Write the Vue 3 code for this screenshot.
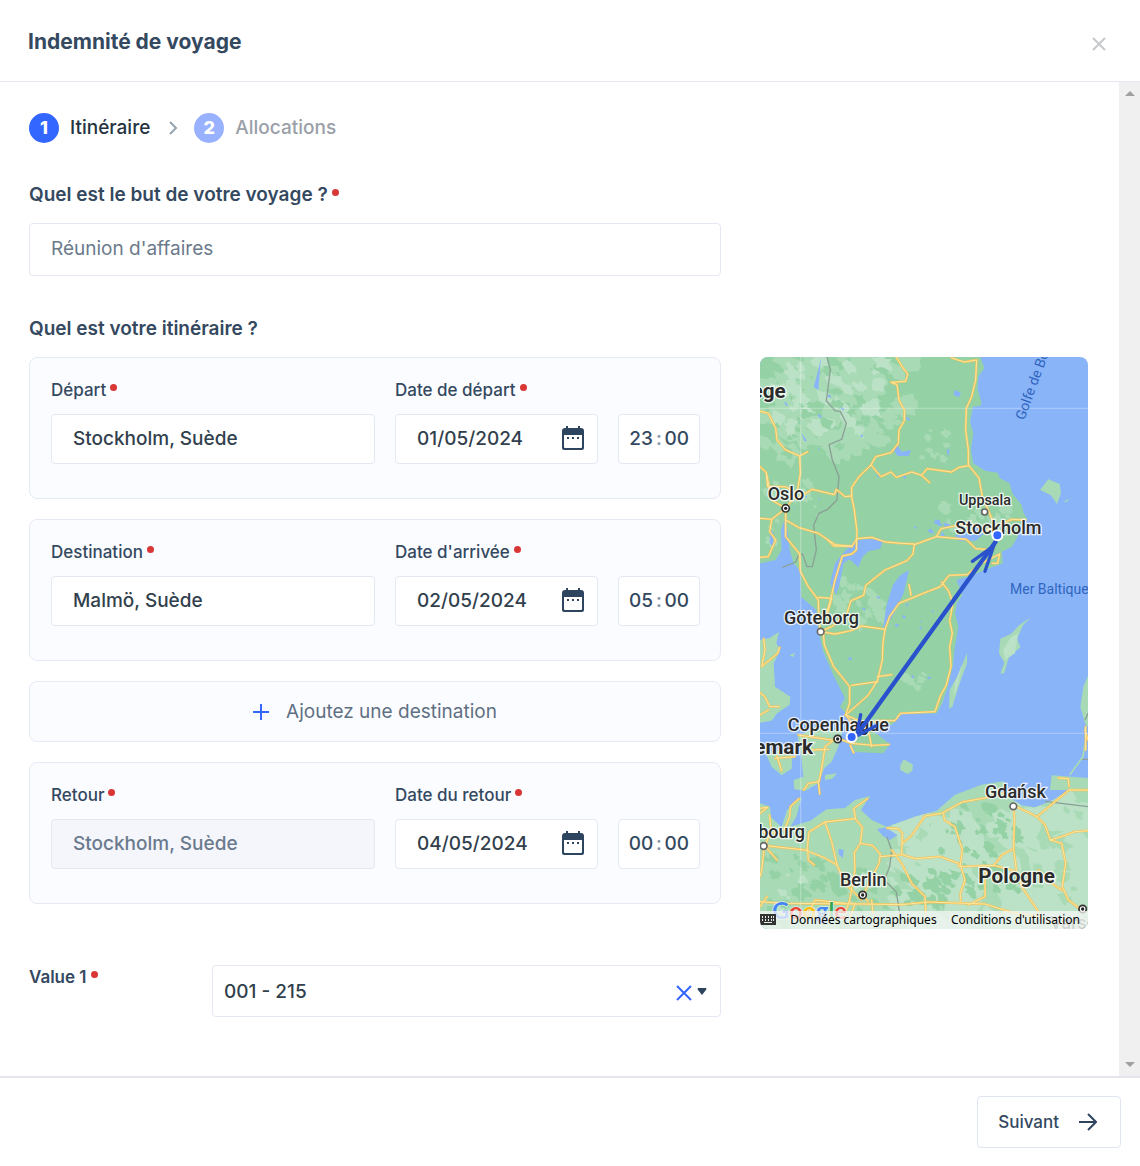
<script setup>
import { ref } from 'vue'

const purpose = ref("Réunion d'affaires")
const account = ref('001 - 215')
const stops = ref([
  { id: 'depart', label: 'Départ', dateLabel: 'Date de départ', place: 'Stockholm, Suède', date: '01/05/2024', hour: '23', minute: '00' },
  { id: 'destination', label: 'Destination', dateLabel: "Date d'arrivée", place: 'Malmö, Suède', date: '02/05/2024', hour: '05', minute: '00' },
  { id: 'add' },
  { id: 'retour', label: 'Retour', dateLabel: 'Date du retour', place: 'Stockholm, Suède', date: '04/05/2024', hour: '00', minute: '00', locked: true }
])

// Deterministic terrain patches: irregular polygons scattered inside a region.
function terrain(seed, count, [x, y, w, h], size) {
  let s = seed * 7919
  const rnd = () => {
    s = (s * 16807) % 2147483647
    return s / 2147483647
  }
  let d = ''
  for (let i = 0; i < count; i++) {
    const cx = x + rnd() * w
    const cy = y + rnd() * h
    const r = size * (0.4 + rnd())
    for (let k = 0; k < 13; k++) {
      const a = (k / 13) * Math.PI * 2
      const q = r * (0.45 + rnd() * 0.75)
      const px = Math.cos(a) * q
      const py = Math.sin(a) * q
      d += `${k ? 'L' : 'M'}${Math.round(cx + px + py * 0.15)} ${Math.round(cy + py * 0.9 + px * 0.15)}`
    }
    d += 'Z'
  }
  return d
}

const patches = [
  { fill: '#a8dab5', d: terrain(11, 60, [15, 21, 330, 300], 36) },
  { fill: '#a8dab5', d: terrain(17, 26, [300, 21, 170, 260], 30) },
  { fill: '#bbe2c6', d: terrain(23, 40, [60, 21, 330, 230], 24) },
  { fill: '#94d2a5', d: terrain(29, 34, [15, 150, 340, 260], 16) },
  { fill: '#a8dab5', d: terrain(31, 12, [500, 240, 80, 100], 14) },
  { fill: '#a8dab5', d: terrain(37, 16, [560, 470, 210, 70], 18) },
  { fill: '#a8dab5', d: terrain(41, 18, [230, 690, 150, 130], 22) },
  { fill: '#a8dab5', d: terrain(43, 8, [430, 970, 90, 50], 14) },
  { fill: '#a8dab5', d: terrain(47, 12, [15, 380, 180, 200], 17) },
  { fill: '#8ab4f8', d: terrain(53, 14, [80, 60, 400, 420], 5) },
  { fill: '#8ab4f8', d: terrain(59, 12, [260, 700, 300, 300], 5) },
  { fill: '#8ab4f8', d: terrain(61, 12, [480, 510, 240, 50], 8) }
]
const southPatches = [
  { fill: '#bbe2c6', d: terrain(67, 80, [430, 1380, 580, 350], 52) },
  { fill: '#94d2a5', d: terrain(71, 50, [560, 1360, 230, 280], 17) },
  { fill: '#94d2a5', d: terrain(73, 34, [15, 1520, 420, 210], 20) },
  { fill: '#94d2a5', d: terrain(79, 16, [440, 1560, 140, 110], 22) },
  { fill: '#bbe2c6', d: terrain(83, 14, [15, 1520, 400, 210], 15) },
  { fill: '#a8dab5', d: terrain(89, 12, [840, 1350, 160, 350], 20) }
]

const roads = [
  'M424 21L440 48L458 72L452 94L408 97L426 104L432 150L448 180L448 212L432 240L430 280L408 308L362 320L348 345L312 380L290 412L290 440L298 480L306 545L304 600L290 612L262 618L240 690L228 745L215 790',
  'M590 24L628 36L665 30L662 90L650 140L634 175L632 240L640 300L640 345L672 384L682 440L708 500L724 540',
  'M348 345L378 380L408 366L424 382L470 366L500 376L516 356L590 366L612 352L642 347M500 376L524 398',
  'M15 184L40 190L62 235L66 270L92 300L134 318L136 370L126 430L92 475L92 560L134 612L136 664L160 710L190 750L192 810L196 845',
  'M134 318L158 305M15 350L34 368L38 410L92 410L126 430M92 475L50 508L44 545L62 570L40 620L15 622M15 505L50 508M34 368L50 450L92 475',
  'M126 445L172 418L238 434L244 418L270 440L290 438M92 510L130 532L190 550L240 584L290 590L306 566L350 562L392 576L440 580L478 582L474 612L456 632L390 660L332 706L326 736L288 752L274 795L230 830L196 845L240 852L288 842L320 828L390 838',
  'M220 572L236 588L292 588M390 838L404 800L432 760L520 724L556 710L582 676L636 674L680 640L734 612L728 640L712 640M478 584L544 560L634 568L662 596L715 600M544 560L558 536L640 520L700 540L770 508L812 510M462 704L468 735',
  'M560 696L580 722L594 758L584 812L592 850L584 890L588 950L574 1005L556 1038L540 1085L436 1090L420 1112L372 1112L330 1120L272 1095',
  'M390 838L384 880L382 930L368 990L340 1035L310 1062L272 1095M368 980L410 974M368 995L290 1006',
  'M205 850L208 885L236 950L268 990L284 1010L284 1060L272 1095M190 742L230 745L215 800',
  'M26 866L30 900L20 950L68 910L74 892M15 1028L30 1040L44 1070L72 1070M40 1080L15 1095',
  'M250 1160L210 1190L204 1230L196 1276L192 1295L160 1300L146 1320M190 1292L194 1332M250 1166L290 1180L352 1186L402 1184M286 1186L296 1208M340 1140L350 1190M130 1155L230 1170M170 1200L220 1198M66 1218L80 1262M272 1095L300 1130L340 1145M60 1225L120 1220',
  'M15 1375L38 1372L15 1390M44 1396L48 1440L30 1490M132 1346L106 1370L104 1400L90 1435L70 1448L15 1446M15 1485L150 1500L210 1524L246 1545L270 1600L320 1650M28 1486L66 1530M28 1490L20 1560L15 1580M158 1498L160 1530L178 1545',
  'M156 1500L162 1446L210 1416L230 1475L246 1545M210 1416L300 1406L322 1432L316 1480L298 1508L300 1560L284 1650L270 1690M338 1346L296 1376L302 1406M316 1480L352 1486L376 1512L372 1540L324 1636L340 1655',
  'M376 1520L440 1514L442 1450L430 1436L396 1434M442 1480L470 1456L510 1398L560 1390L622 1356L700 1342L742 1330M440 1514L482 1526L556 1520L610 1540L612 1550L716 1546L730 1530L740 1515L772 1498',
  'M410 1500L440 1540L470 1600L510 1640L512 1690M566 1390L568 1410L600 1430L622 1500L616 1545L630 1590L616 1630L618 1656',
  'M15 1655L90 1660L324 1662L440 1664L520 1656L690 1662L780 1690L860 1700M160 1690L180 1650L270 1660M15 1670L36 1640M300 1660L286 1700M350 1650L354 1690',
  'M776 1370L778 1400L776 1498L784 1560L800 1610L850 1685M784 1370L846 1400L942 1320L999 1320M846 1400L870 1425L886 1470L920 1460L960 1445L999 1442M886 1470L920 1480L932 1540L922 1610L940 1650L980 1680M910 1284L940 1286L942 1310M800 1580L770 1560L716 1546M690 1560L690 1640L640 1665M850 1560L890 1600L920 1620',
  'M992 1130L992 1200M990 1140L999 1170'
]
</script>

<template>
  <div class="dialog">
    <header class="header">
      <h1 class="title">Indemnité de voyage</h1>
      <button class="icon-button close" type="button" aria-label="Fermer">
        <svg width="14" height="14" viewBox="0 0 14 14"><path d="M1 1L13 13M13 1L1 13" stroke="#c6c8cb" stroke-width="2" /></svg>
      </button>
    </header>

    <div class="body">
      <main class="content">
        <ol class="steps">
          <li class="step"><span class="bullet">1</span>Itinéraire</li>
          <li class="chevron" aria-hidden="true">
            <svg width="10" height="16" viewBox="0 0 10 16"><path d="M2 2L8 8L2 14" fill="none" stroke="#96a3af" stroke-width="2" /></svg>
          </li>
          <li class="step pending"><span class="bullet">2</span>Allocations</li>
        </ol>

        <form class="form" @submit.prevent>
          <div class="purpose">
            <label class="question" for="purpose">Quel est le but de votre voyage ?<i class="dot"></i></label>
            <input id="purpose" v-model="purpose" class="box purpose-input" type="text" />
          </div>

          <h2 class="question itinerary-title">Quel est votre itinéraire ?</h2>

          <div class="stops">
            <template v-for="stop in stops" :key="stop.id">
              <button v-if="stop.id === 'add'" class="add" type="button">
                <svg width="16" height="16" viewBox="0 0 16 16"><path d="M8 0V16M0 8H16" stroke="#3366ff" stroke-width="2" /></svg>
                <span>Ajoutez une destination</span>
              </button>
              <section v-else class="card">
                <div class="field place">
                  <label class="label" :for="stop.id">{{ stop.label }}<i class="dot"></i></label>
                  <input :id="stop.id" v-model="stop.place" class="box" type="text" :disabled="stop.locked" />
                </div>
                <div class="field when">
                  <label class="label" :for="stop.id + '-date'">{{ stop.dateLabel }}<i class="dot"></i></label>
                  <div class="when-row">
                    <div class="box date">
                      <input :id="stop.id + '-date'" v-model="stop.date" type="text" />
                      <button class="icon-button" type="button" aria-label="Calendrier">
                        <svg width="22" height="24" viewBox="0 0 22 24">
                          <path fill="#2e4560" fill-rule="evenodd" d="M3 2H4V0H6V2H16V0H18V2H19Q22 2 22 5V22Q22 24 20 24H2Q0 24 0 22V5Q0 2 3 2ZM2 9V21Q2 22 3 22H19Q20 22 20 21V9ZM5 11H7V13H5ZM10 11H12V13H10ZM15 11H17V13H15Z" />
                        </svg>
                      </button>
                    </div>
                    <div class="box time">
                      <input v-model="stop.hour" type="text" aria-label="Heures" /><span>:</span><input v-model="stop.minute" type="text" aria-label="Minutes" />
                    </div>
                  </div>
                </div>
              </section>
            </template>
          </div>

          <div class="map">
            <svg class="map-canvas" viewBox="15 21 984 1716" preserveAspectRatio="xMidYMid slice" role="img" aria-label="Carte du trajet">
              <defs>
                <path id="scandinavia" d="M15 21L676 21L688 55L670 80L668 118L680 160L674 168L654 170L645 215L655 250L648 300L655 340L690 362L728 368L735 385L764 400L758 378L772 430L800 465L806 490L816 505L790 530L788 560L770 590L740 606L744 640L715 650L690 660L640 680L605 690L622 735L606 760L600 790L610 830L600 890L594 945L578 1010L562 1060L545 1090L440 1092L410 1125L355 1110L350 1140L405 1182L385 1210L300 1206L285 1165L300 1120L255 1070L270 1045L235 975L205 905L192 850L184 780L138 740L136 664L116 640L104 600L98 545L90 505L78 540L80 600L62 630L15 640Z" />
                <path id="continent" d="M15 1360L45 1370L48 1402L80 1432L96 1380L140 1340L124 1400L106 1430L166 1412L215 1378L270 1374L300 1350L345 1338L318 1380L350 1410L395 1430L420 1422L480 1400L545 1382L600 1334L680 1304L745 1294L760 1310L736 1322L760 1340L800 1366L840 1372L895 1350L940 1320L885 1320L890 1276L999 1284V1737H15ZM999 978L985 1010L976 1070L990 1120L999 1130ZM15 870L44 864L72 846L64 880L76 900L56 940L60 1010L106 1040L104 1064L66 1090L50 1112L15 1118ZM128 1160L180 1132L262 1142L250 1190L230 1235L208 1255L190 1300L152 1322L118 1318L116 1290L145 1280L140 1230ZM34 1214L80 1196L112 1204L110 1256L80 1276L50 1250Z" />
                <clipPath id="north"><use href="#scandinavia" /></clipPath>
                <clipPath id="south"><use href="#continent" /></clipPath>
              </defs>

              <rect x="15" y="21" width="984" height="1716" fill="#8ab4f8" />
              <use href="#scandinavia" fill="#94d2a5" />
              <g clip-path="url(#north)">
                <path v-for="(patch, i) in patches" :key="i" :d="patch.d" :fill="patch.fill" />
              </g>
              <use href="#continent" fill="#a8dab5" />
              <g clip-path="url(#south)">
                <path v-for="(patch, i) in southPatches" :key="i" :d="patch.d" :fill="patch.fill" />
              </g>

              <!-- islands -->
              <path fill="#a8dab5" d="M855 420L880 388L914 402L918 430L906 462L888 436ZM925 455L945 445L935 455ZM828 802L792 826L768 852L736 866L732 910L748 938L736 972L748 968L762 920L796 892L786 866L804 826ZM636 908L612 970L584 1020L582 1076L592 1070L614 1000L636 940ZM436 1246L446 1228L474 1244L472 1262L458 1272L436 1260ZM104 916L120 908L114 922ZM210 1275L246 1270L232 1286L210 1290Z" />
              <path fill="#bbe2c6" d="M768 862L790 850L780 910L750 930L744 900ZM600 1000L622 940L610 1000L596 1040Z" />
              <!-- lakes -->
              <path fill="#8ab4f8" d="M225 700L240 640L262 612L298 572L330 568L384 568L376 596L340 604L322 622L310 652L284 628L266 640L254 700L244 734ZM462 660L446 730L410 804L384 836L394 768L414 704L436 676ZM425 282L440 305L468 300L462 318L428 318L416 300ZM198 21L190 120L176 110L190 60ZM598 120L618 128L612 142L596 134ZM140 250L156 272L148 274ZM366 1438L392 1432L428 1456L404 1470L384 1458ZM252 1496L266 1500L264 1524L250 1512ZM574 300L584 296L580 320ZM46 540L56 550L54 590L44 580ZM600 555L690 548L662 572L610 572Z" />

              <path fill="none" stroke="#8aa096" stroke-width="4" d="M216 21L226 60L214 152L240 182L256 184L274 220L260 268L222 284L232 330L252 380L246 450L218 478L192 490L176 526L184 600L172 650L156 650L142 612L130 618L122 636L82 652M396 1462L410 1500L404 1550L388 1590L424 1626L434 1690M870 1354L999 1370M976 1228H999M999 1090L990 1110" />
              <path fill="none" stroke="#a8dab5" stroke-width="5" d="M990 1180L984 1220L944 1275" />

              <g fill="none" stroke-linejoin="round" stroke-linecap="round">
                <path v-for="(road, i) in roads" :key="'e' + i" :d="road" stroke="#efc25a" stroke-width="7" />
                <path v-for="(road, i) in roads" :key="'c' + i" :d="road" stroke="#ffe8a0" stroke-width="3" />
              </g>

              <path d="M137 21V1737M15 175H999M15 1150H999" stroke="#ffffff" stroke-opacity="0.25" stroke-width="4" />

              <g stroke="#333333" stroke-width="5" fill="#ffffff">
                <circle cx="92" cy="475" r="11" /><circle cx="248" cy="1167" r="11" /><circle cx="323" cy="1635" r="11" /><circle cx="983" cy="1677" r="11" />
                <g stroke="#666666"><circle cx="689" cy="486" r="9" /><circle cx="197" cy="845" r="10" /><circle cx="775" cy="1369" r="10" /><circle cx="26" cy="1488" r="10" /></g>
              </g>
              <g fill="#222222"><circle cx="92" cy="475" r="5" /><circle cx="248" cy="1167" r="5" /><circle cx="323" cy="1635" r="5" /><circle cx="983" cy="1677" r="5" /></g>

              <g class="city">
                <text x="38" y="450">Oslo</text>
                <text x="612" y="465" class="town">Uppsala</text>
                <text x="601" y="553">Stockholm</text>
                <text x="87" y="823">Göteborg</text>
                <text x="98" y="1143">Copenhague</text>
                <text x="690" y="1345">Gdańsk</text>
                <text x="150" y="1464" text-anchor="end">Hambourg</text>
                <text x="255" y="1609">Berlin</text>
              </g>
              <g class="country">
                <text x="92" y="143" text-anchor="end">Norvège</text>
                <text x="174" y="1213" text-anchor="end">Danemark</text>
                <text x="670" y="1600">Pologne</text>
              </g>
              <g class="sea">
                <text x="765" y="731">Mer Baltique</text>
                <text transform="translate(808 212) rotate(-70)">Golfe de Botnie</text>
              </g>
              <text class="city" x="885" y="1738" opacity="0.6">Varsovie</text>

              <g fill="none" stroke="#2a52cc" stroke-linecap="round">
                <path stroke-width="13" d="M722 575L310 1148" />
                <path stroke-width="10" d="M652 634L716 588L690 664M317 1094L305 1158L362 1128" />
              </g>
              <g fill="#3366ff" stroke="#ffffff" stroke-width="6"><circle cx="727" cy="556" r="15" /><circle cx="290" cy="1161" r="15" /></g>

              <text class="google" x="52" y="1707"><tspan fill="#4285f4">G</tspan><tspan fill="#ea4335">o</tspan><tspan fill="#fbbc04">o</tspan><tspan fill="#4285f4">g</tspan><tspan fill="#34a853">l</tspan><tspan fill="#ea4335">e</tspan></text>
            </svg>
            <div class="attribution">
              <svg width="16" height="11" viewBox="0 0 16 11"><path fill="#333333" fill-rule="evenodd" d="M0 0H16V11H0ZM2 2V4H3V2ZM5 2V4H6V2ZM8 2V4H9V2ZM11 2V4H12V2ZM13 2V4H14V2ZM2 5V7H3V5ZM5 5V7H6V5ZM8 5V7H9V5ZM11 5V7H12V5ZM13 5V7H14V5ZM4 8V9H12V8Z" /></svg>
              <a href="#">Données cartographiques</a>
              <a href="#">Conditions d'utilisation</a>
            </div>
          </div>

          <div class="value">
            <label class="label value-label" for="value1">Value 1<i class="dot"></i></label>
            <div class="box select">
              <select id="value1" v-model="account"><option>001 - 215</option></select>
              <button class="icon-button clear" type="button" aria-label="Effacer">
                <svg width="16" height="16" viewBox="0 0 16 16"><path d="M1 1L15 15M15 1L1 15" stroke="#3366ff" stroke-width="2" /></svg>
              </button>
              <svg class="caret" width="10" height="7" viewBox="0 0 10 7"><path fill="#2e4560" d="M1 0H9Q10 1 9 2L5 7L1 2Q0 1 1 0Z" /></svg>
            </div>
          </div>
        </form>
      </main>
      <div class="scrollbar" aria-hidden="true">
        <svg width="10" height="6" viewBox="0 0 10 6"><path fill="#a0a0a0" d="M0 5L5 0L10 5Z" /></svg>
        <svg width="10" height="6" viewBox="0 0 10 6"><path fill="#a0a0a0" d="M0 0L5 5L10 0Z" /></svg>
      </div>
    </div>

    <footer class="footer">
      <button class="next" type="button">
        <span>Suivant</span>
        <svg width="18" height="18" viewBox="0 0 18 18"><path d="M0 9H17M9 1L17 9L9 17" fill="none" stroke="#2e4560" stroke-width="2" /></svg>
      </button>
    </footer>
  </div>
</template>

<style>
body {
  margin: 0;
  background: #ffffff;
}
</style>

<style scoped>
* {
  box-sizing: border-box;
}
.dialog {
  display: flex;
  flex-direction: column;
  min-height: 100vh;
  font-family: Inter, "Liberation Sans", sans-serif;
  font-size: 19px;
  color: #34495f;
}
input,
select,
button {
  font: inherit;
  color: inherit;
}
.header {
  display: flex;
  align-items: center;
  justify-content: space-between;
  height: 82px;
  padding: 6px 34px 0 28px;
  border-bottom: 1px solid #e6e9f4;
}
.title {
  margin: 0 0 4px;
  font-size: 21px;
  line-height: 28px;
  font-weight: 700;
}
.icon-button {
  display: flex;
  padding: 0;
  border: 0;
  background: none;
}
.body {
  display: flex;
  flex: 1;
}
.content {
  flex: 1;
  padding: 31px 31px 40px 29px;
}
.steps {
  display: flex;
  align-items: center;
  margin: 0;
  padding: 0;
  list-style: none;
  line-height: 30px;
  font-weight: 500;
  color: #26323f;
}
.step {
  display: flex;
  align-items: center;
  gap: 11px;
}
.pending {
  color: #9a9fa8;
}
.bullet {
  width: 30px;
  height: 30px;
  border-radius: 50%;
  background: #3366ff;
  color: #ffffff;
  font-size: 18px;
  font-weight: 800;
  text-align: center;
}
.pending .bullet {
  background: #99b2ff;
}
.chevron {
  display: flex;
  margin: 0 16px 0 18px;
}
.form {
  display: grid;
  grid-template-columns: minmax(0, 1fr) 328px;
  grid-template-rows: auto auto auto 1fr;
  column-gap: 39px;
}
.purpose {
  grid-column: 1;
  margin-top: 40px;
}
.question {
  display: block;
  margin: 0;
  font-size: 19px;
  line-height: 24px;
  font-weight: 600;
}
.dot {
  display: inline-block;
  width: 7px;
  height: 7px;
  margin-left: 4px;
  border-radius: 50%;
  background: #d93636;
  vertical-align: 5px;
}
.box {
  width: 100%;
  height: 50px;
  border: 1px solid #e4e8f3;
  border-radius: 4px;
  background: #ffffff;
  padding: 0 21px 2px;
  color: #323f4d;
  font-weight: 500;
}
.purpose-input {
  height: 53px;
  margin-top: 16px;
  color: #6b7a8b;
  font-weight: 400;
}
.itinerary-title {
  grid-column: 1;
  margin: 41px 0 16px;
}
.stops {
  grid-column: 1;
  grid-row: 3;
  display: flex;
  flex-direction: column;
  gap: 20px;
}
.card {
  display: flex;
  gap: 20px;
  padding: 20px 20px 34px 21px;
  border: 1px solid #e6eaf5;
  border-radius: 8px;
  background: #fbfcff;
}
.place {
  flex: 1;
}
.label {
  display: block;
  margin-bottom: 12px;
  font-size: 17px;
  line-height: 24px;
  font-weight: 500;
}
.when-row {
  display: flex;
  gap: 20px;
}
.date {
  display: flex;
  align-items: center;
  justify-content: space-between;
  width: 203px;
  padding-right: 13px;
}
.date input,
.time input {
  min-width: 0;
  padding: 0;
  border: 0;
  background: none;
}
.date input {
  width: 120px;
}
.time {
  display: flex;
  align-items: center;
  justify-content: center;
  gap: 2px;
  width: 82px;
  padding: 0 0 2px;
  color: #34495f;
}
.time span {
  color: #8794a5;
}
.time input {
  width: 26px;
  text-align: center;
}
.box:disabled {
  background: #f4f6fb;
  color: #6b7a8d;
}
.add {
  display: flex;
  align-items: center;
  justify-content: center;
  gap: 17px;
  height: 61px;
  border: 1px solid #e6eaf5;
  border-radius: 8px;
  background: #fbfcff;
  color: #5f7082;
}
.map {
  position: relative;
  grid-column: 2;
  grid-row: 3 / span 2;
  align-self: start;
  overflow: hidden;
  border-radius: 8px;
}
.map-canvas {
  display: block;
  width: 100%;
}
.city,
.country,
.sea,
.google {
  font-family: Roboto, "Liberation Sans", sans-serif;
}
.city {
  font-size: 54px;
  font-weight: 500;
}
.town {
  font-size: 43px;
}
.country {
  font-size: 62px;
  font-weight: 700;
}
.city,
.country {
  fill: #2b2b2b;
  stroke: #ffffff;
  stroke-width: 8px;
  stroke-opacity: 0.8;
  paint-order: stroke;
}
.sea {
  font-size: 42px;
  fill: #2f66bf;
}
.google {
  font-family: Lato, sans-serif;
  font-size: 70px;
  font-weight: 700;
  stroke: #ffffff;
  stroke-width: 5px;
  stroke-opacity: 0.6;
  paint-order: stroke;
}
.attribution {
  position: absolute;
  left: 0;
  right: 0;
  bottom: 0;
  display: flex;
  align-items: center;
  justify-content: space-between;
  height: 18px;
  padding: 0 8px 2px 0;
  background: rgba(245, 247, 245, 0.75);
  font-family: "Noto Sans", sans-serif;
  font-size: 12px;
  white-space: nowrap;
}
.attribution a {
  color: #000000;
  text-decoration: none;
}
.value {
  grid-column: 1;
  grid-row: 4;
  align-self: start;
  display: flex;
  margin-top: 61px;
}
.value-label {
  width: 183px;
  font-weight: 600;
}
.select {
  display: flex;
  flex: 1;
  align-items: center;
  height: 52px;
  padding: 0 13px 0 11px;
}
.select select {
  flex: 1;
  height: 50px;
  padding: 0;
  border: 0;
  background: none;
  appearance: none;
}
.clear {
  margin: 3px 5px 0 0;
}
.scrollbar {
  display: flex;
  flex-direction: column;
  justify-content: space-between;
  align-items: center;
  width: 21px;
  padding: 9px 0 8px;
  background: #f0f0f1;
}
.footer {
  display: flex;
  justify-content: flex-end;
  padding: 18px 19px;
  border-top: 2px solid #e4e6ec;
}
.next {
  display: flex;
  align-items: center;
  gap: 20px;
  height: 52px;
  padding: 0 23px 0 20px;
  border: 1px solid #e0e5f3;
  border-radius: 4px;
  background: #ffffff;
  font-size: 17px;
  font-weight: 500;
}
</style>
